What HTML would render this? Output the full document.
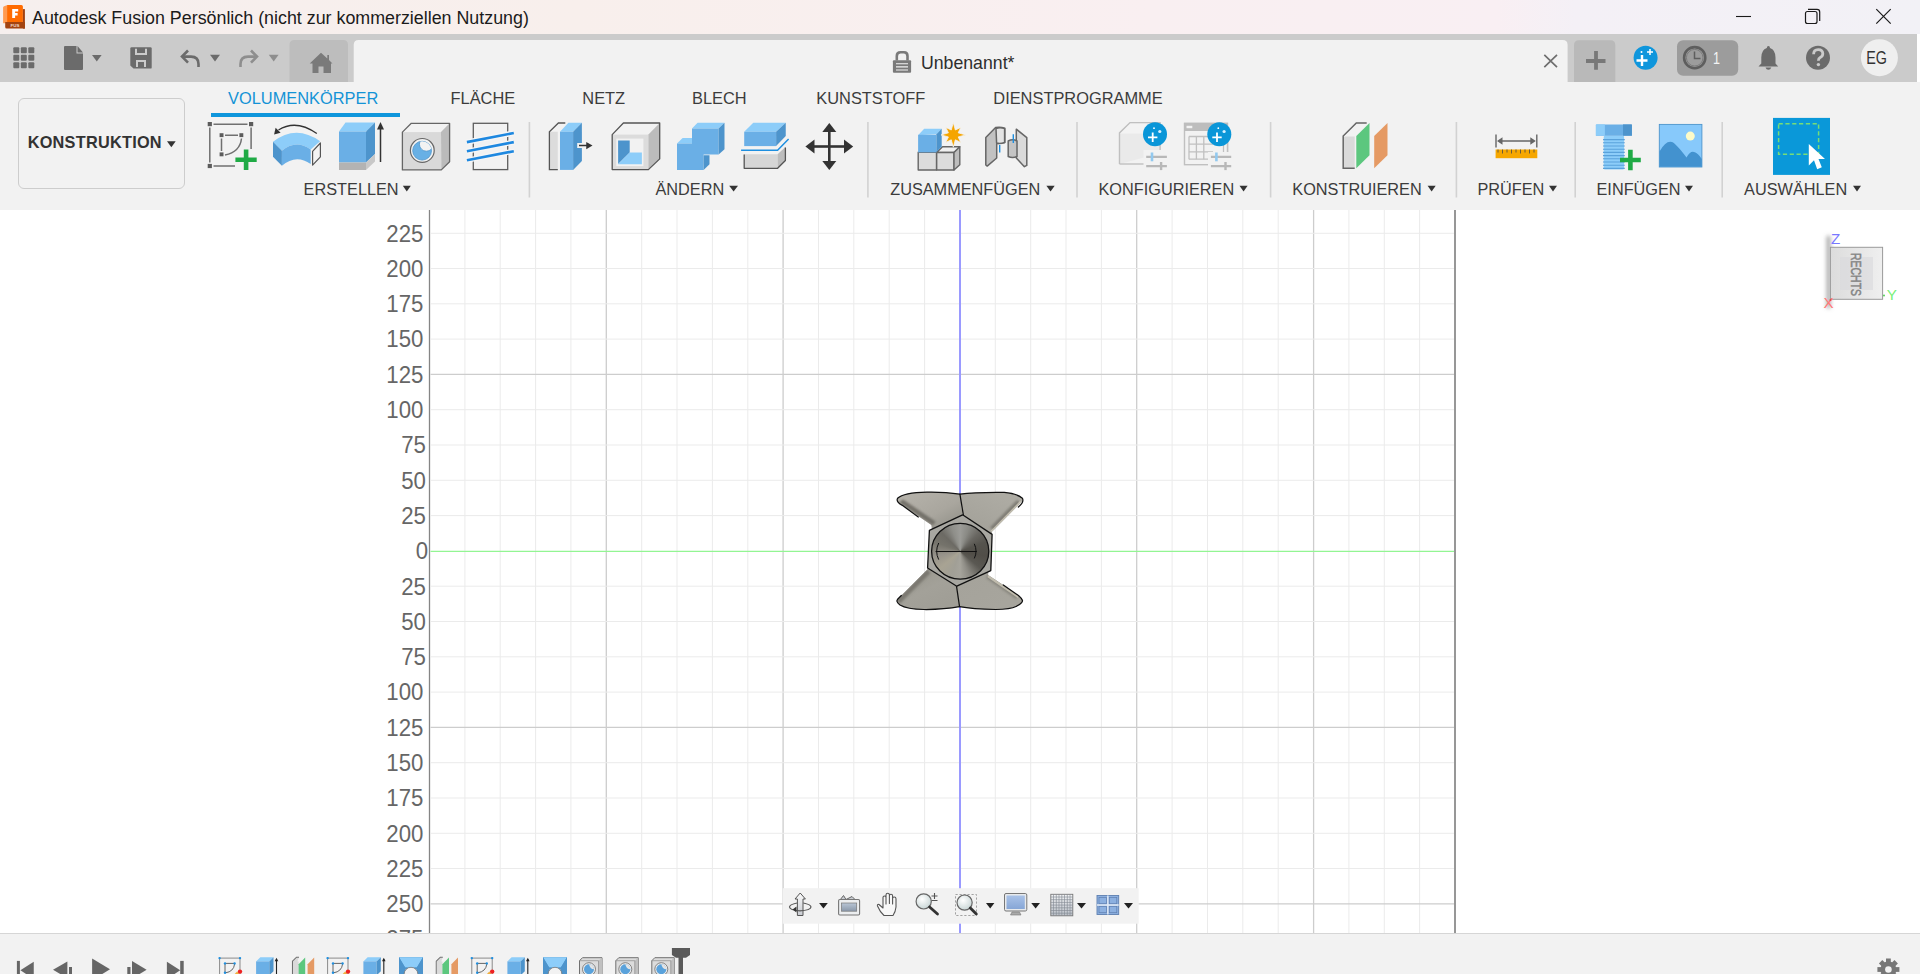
<!DOCTYPE html>
<html><head><meta charset="utf-8">
<style>
*{margin:0;padding:0;box-sizing:border-box}
html,body{width:1920px;height:974px;overflow:hidden;background:#fff;font-family:"Liberation Sans",sans-serif}
.abs{position:absolute}
#title{left:0;top:0;width:1920px;height:34px;background:linear-gradient(90deg,#f6efee 0%,#f8efec 30%,#f9eff1 60%,#f9eff3 78%,#f4f0f6 82%,#f2f1f6 100%)}
#title .t{left:32px;top:8px;font-size:17.85px;color:#1b1b1b;white-space:nowrap}
#strip{left:0;top:34px;width:1917px;height:48px;background:#cbcbcb}
#ribbon{left:0;top:82px;width:1920px;height:128px;background:#f2f2f2}
#view{left:0;top:210px;width:1920px;height:723px;background:#fff}
#tl{left:0;top:933px;width:1920px;height:41px;background:#f2f2f2;border-top:1px solid #d6d6d6}
.tab{top:89px;font-size:16.4px;color:#3c3c3c;white-space:nowrap}
.grp{top:180px;font-size:16.3px;color:#3c3c3c;white-space:nowrap}
.tri{display:inline-block;width:0;height:0;border-left:4.5px solid transparent;border-right:4.5px solid transparent;border-top:6px solid #333;vertical-align:middle;margin-left:4px;position:relative;top:-2px}
.sep{top:122px;width:2px;height:76px;background:#d4d4d4}
</style></head><body>
<div id="title" class="abs">
<svg class="abs" style="left:0;top:0" width="30" height="32" viewBox="0 0 30 32">
<path d="M3.1 7.6 Q3.1 6.6 4.1 6.3 L7.5 5 V23.2 H3.1 Z" fill="#ff9a50"/>
<path d="M7.1 4.9 H21.4 Q22.9 4.9 22.9 6.4 V22 H7.1 Z" fill="#ff6b00"/>
<path d="M22.9 9.1 H24.9 V28.6 H22.9 Z" fill="#a04010"/>
<path d="M5.2 22 H24.9 V28.6 H6.7 Q5.2 28.6 5.2 27.1 Z" fill="#a34310"/>
<path d="M12.2 8.9 H18.2 V11.4 H15.1 V13 H17.6 V15.4 H15.1 V17.9 H12.2 Z" fill="#fff"/>
<text x="15" y="26.6" font-family="Liberation Sans" font-weight="700" font-size="4.4" fill="#f2dccc" text-anchor="middle" textLength="8.9" lengthAdjust="spacingAndGlyphs">FUS</text>
</svg>
<div class="abs t">Autodesk Fusion Persönlich (nicht zur kommerziellen Nutzung)</div>
<svg class="abs" style="left:1730px;top:4px" width="170" height="26" viewBox="1730 4 170 26">
<line x1="1736" y1="16.5" x2="1751" y2="16.5" stroke="#1a1a1a" stroke-width="1.1"/>
<rect x="1805.5" y="11.5" width="11.5" height="12" rx="2" fill="none" stroke="#1a1a1a" stroke-width="1.2"/>
<path d="M1808 9.3 H1817 Q1819.7 9.3 1819.7 12 V21" fill="none" stroke="#1a1a1a" stroke-width="1.2"/>
<path d="M1876.3 9.2 L1890.7 23.6 M1890.7 9.2 L1876.3 23.6" stroke="#1a1a1a" stroke-width="1.2"/>
</svg>

</div>
<div id="strip" class="abs"></div>
<svg class="abs" style="left:0;top:34px" width="1920" height="48" viewBox="0 34 1920 48">
<!-- app grid -->
<g fill="#6b6b6b">
<rect x="13.3" y="47.3" width="6" height="6" rx="1"/><rect x="20.8" y="47.3" width="6" height="6" rx="1"/><rect x="28.3" y="47.3" width="6" height="6" rx="1"/>
<rect x="13.3" y="54.8" width="6" height="6" rx="1"/><rect x="20.8" y="54.8" width="6" height="6" rx="1"/><rect x="28.3" y="54.8" width="6" height="6" rx="1"/>
<rect x="13.3" y="62.3" width="6" height="6" rx="1"/><rect x="20.8" y="62.3" width="6" height="6" rx="1"/><rect x="28.3" y="62.3" width="6" height="6" rx="1"/>
</g>
<!-- file -->
<path d="M65 46 H76.5 V53.5 H83 V69 Q83 70 82 70 H65 Q64 70 64 69 V47 Q64 46 65 46 Z" fill="#6b6b6b"/>
<path d="M77.5 46 L83 52.5 H77.5 Z" fill="#6b6b6b"/>
<path d="M92 55 H101.6 L96.8 61.4 Z" fill="#6b6b6b"/>
<!-- save -->
<path d="M131.5 47.3 H150.5 Q151.7 47.3 151.7 48.5 V67.4 Q151.7 68.6 150.5 68.6 H133.5 L130.3 65.5 V48.5 Q130.3 47.3 131.5 47.3 Z" fill="#6b6b6b"/>
<path d="M135 48.8 V55 H147 V48.8 H145 V53 H137 V48.8 Z" fill="#cbcbcb"/>
<path d="M136 67 V60 H146 V67 H144 V62 H138 V67 Z" fill="#cbcbcb"/>
<!-- undo -->
<path d="M188 50.5 L182 56.6 L188 62.7" fill="none" stroke="#6b6b6b" stroke-width="2.6" stroke-linejoin="miter"/>
<path d="M182.5 56.6 H191 Q198.5 56.6 198.5 64 V67" fill="none" stroke="#6b6b6b" stroke-width="2.6"/>
<path d="M210 54.8 H220 L215 61.5 Z" fill="#6b6b6b"/>
<!-- redo -->
<path d="M251 50.5 L257 56.6 L251 62.7" fill="none" stroke="#8e8e8e" stroke-width="2.6"/>
<path d="M256.5 56.6 H248 Q240.5 56.6 240.5 64 V67" fill="none" stroke="#8e8e8e" stroke-width="2.6"/>
<path d="M268.8 54.8 H278.6 L273.7 61.5 Z" fill="#8e8e8e"/>
<!-- home tab -->
<path d="M289.5 82 V45 Q289.5 40 294.5 40 H343 Q348 40 348 45 V82 Z" fill="#bdbdbd"/>
<path d="M321 52.7 L309.7 63.5 L312.5 63.5 V73 H331 V63.5 H332.5 L329 60 V55 H327.3 V58.5 Z" fill="#7a7a7a"/>
<rect x="318.5" y="66.5" width="5" height="6.5" fill="#bdbdbd"/>
<!-- doc tab -->
<path d="M353.7 82 V45 Q353.7 40 358.7 40 H1562.6 Q1567.6 40 1567.6 45 V82 Z" fill="#f2f2f2"/>
<path d="M1544.3 54.9 L1557 67.2 M1557 54.9 L1544.3 67.2" stroke="#6e6e6e" stroke-width="1.7"/>
<!-- lock -->
<path d="M896.8 60.5 V56 Q896.8 52.2 900.5 52.2 H904 Q907.5 52.2 907.5 56 V60.5" fill="none" stroke="#7a7a7a" stroke-width="2.6"/>
<rect x="892.9" y="60.3" width="18.2" height="12.5" rx="1" fill="#7a7a7a"/>
<path d="M896 63.8 H908 M896 66.9 H908 M896 70 H908" stroke="#f2f2f2" stroke-width="1.1"/>
<!-- + tab -->
<path d="M1574 82 V45 Q1574 40.2 1579 40.2 H1610.3 Q1615.3 40.2 1615.3 45 V82 Z" fill="#b9b9b9"/>
<path d="M1596 51 V69.7 M1586 61 H1605.5" stroke="#787878" stroke-width="3.8"/>
<!-- sparkle blue -->
<circle cx="1645.6" cy="57.7" r="12" fill="#0f96dc"/>
<path d="M1642 55 V66 M1636.5 60.5 H1647.5" stroke="#fff" stroke-width="2.4"/>
<path d="M1650 49 V55 M1647 52 H1653" stroke="#fff" stroke-width="1.5"/>
<circle cx="1641.5" cy="52" r="1" fill="#fff"/>
<!-- clock pill -->
<rect x="1677" y="40.2" width="61.2" height="35.5" rx="6" fill="#9c9c9c"/>
<circle cx="1694.7" cy="57.7" r="10.6" fill="none" stroke="#5e5e5e" stroke-width="2.6"/>
<circle cx="1694.7" cy="57.7" r="8.3" fill="none" stroke="#777" stroke-width="0.9"/>
<path d="M1694.5 51.5 V58.6 H1700.5" fill="none" stroke="#5e5e5e" stroke-width="1.5"/>
<text x="1716.4" y="63.8" font-family="Liberation Sans" font-size="16.5" fill="#f4f4f4" text-anchor="middle" textLength="7" lengthAdjust="spacingAndGlyphs">1</text>
<!-- bell -->
<path d="M1768.4 46 Q1770 46 1770 48 Q1775.5 50 1775.5 57.5 V63.5 L1778.2 66.5 H1758.5 L1761.3 63.5 V57.5 Q1761.3 50 1766.8 48 Q1766.8 46 1768.4 46 Z" fill="#6b6b6b"/>
<path d="M1765.5 67.5 H1771.3 Q1770.5 69.8 1768.4 69.8 Q1766.3 69.8 1765.5 67.5 Z" fill="#6b6b6b"/>
<!-- help -->
<circle cx="1818" cy="57.7" r="12" fill="#6b6b6b"/>
<path d="M1813.6 54.2 Q1813.6 49.6 1818.2 49.6 Q1822.8 49.6 1822.8 53.8 Q1822.8 56.2 1820.2 57.6 Q1818.4 58.6 1818.4 60.8" fill="none" stroke="#cbcbcb" stroke-width="2.8"/>
<circle cx="1818.4" cy="64.6" r="1.7" fill="#cbcbcb"/>
<!-- avatar -->
<circle cx="1879.4" cy="57.7" r="18.5" fill="#efefef"/>
<text x="1866.2" y="63.6" font-family="Liberation Sans" font-size="17.6" fill="#333" textLength="20.7" lengthAdjust="spacingAndGlyphs">EG</text>
</svg>
<div class="abs" style="left:921px;top:53px;font-size:17.7px;color:#2e2e2e;white-space:nowrap">Unbenannt*</div>

<div id="ribbon" class="abs"></div>
<div class="abs" style="left:17.5px;top:98px;width:167.5px;height:91px;border:1.5px solid #cdcdcd;border-radius:6px"></div>
<div class="abs" style="left:27.7px;top:132.5px;font-size:16.3px;font-weight:700;color:#333;white-space:nowrap;letter-spacing:0.25px">KONSTRUKTION</div>
<div class="tab abs" style="left:228px;color:#1493d6">VOLUMENKÖRPER</div>
<div class="abs" style="left:210.5px;top:113px;width:189.5px;height:4px;background:#0f96dc"></div>
<div class="tab abs" style="left:450.5px">FLÄCHE</div>
<div class="tab abs" style="left:582.3px">NETZ</div>
<div class="tab abs" style="left:692px">BLECH</div>
<div class="tab abs" style="left:816.3px">KUNSTSTOFF</div>
<div class="tab abs" style="left:993.3px">DIENSTPROGRAMME</div>
<div class="grp abs" style="left:303.6px">ERSTELLEN</div>
<div class="grp abs" style="left:655.4px">ÄNDERN</div>
<div class="grp abs" style="left:890.2px">ZUSAMMENFÜGEN</div>
<div class="grp abs" style="left:1098.5px">KONFIGURIEREN</div>
<div class="grp abs" style="left:1292.3px">KONSTRUIEREN</div>
<div class="grp abs" style="left:1477.4px">PRÜFEN</div>
<div class="grp abs" style="left:1596.5px">EINFÜGEN</div>
<div class="grp abs" style="left:1744.1px">AUSWÄHLEN</div>
<svg class="abs" style="left:0;top:82px" width="1920" height="128" viewBox="0 82 1920 128">
<g fill="#333">
<path d="M167 141.2 H175.7 L171.35 147.2 Z"/>
<path d="M402.8 185.8 H410.8 L406.8 191.5 Z"/>
<path d="M729.2 185.8 H738 L733.6 191.5 Z"/>
<path d="M1046.4 185.8 H1054.7 L1050.55 191.5 Z"/>
<path d="M1239.5 185.8 H1247.6 L1243.55 191.5 Z"/>
<path d="M1427.6 185.8 H1435.7 L1431.65 191.5 Z"/>
<path d="M1549 185.8 H1557 L1553 191.5 Z"/>
<path d="M1685 185.8 H1693 L1689 191.5 Z"/>
<path d="M1853 185.8 H1861 L1857 191.5 Z"/>
</g>
<g fill="#d2d2d2">
<rect x="528.6" y="122" width="1.6" height="75.5"/>
<rect x="867.1" y="122" width="1.6" height="75.5"/>
<rect x="1076.2" y="122" width="1.6" height="75.5"/>
<rect x="1269.8" y="122" width="1.6" height="75.5"/>
<rect x="1455.6" y="122" width="1.6" height="75.5"/>
<rect x="1574.4" y="122" width="1.6" height="75.5"/>
<rect x="1721.4" y="122" width="1.6" height="75.5"/>
</g>
<!-- sketch -->
<g stroke="#707070" stroke-width="1.5" fill="none">
<path d="M209.8 127.5 V162.5 M213.5 124.2 H247.5 M251.1 127.5 V149 M213.5 166 H235"/>
<path d="M221.5 138.5 V151 M225 135.2 H238 M241.5 138.5 Q240 152 225 155"/>
</g>
<g fill="#5c5c5c">
<rect x="207.7" y="122" width="4.2" height="4.2"/><rect x="249" y="122" width="4.2" height="4.2"/><rect x="207.7" y="163.9" width="4.2" height="4.2"/>
<rect x="219.6" y="133.2" width="3.9" height="3.9"/><rect x="239.4" y="133.2" width="3.9" height="3.9"/><rect x="219.6" y="152.4" width="3.9" height="3.9"/>
</g>
<path d="M246.1 149.5 V170 M235.4 159.8 H256.7" stroke="#1faa45" stroke-width="4.6"/>
<!-- revolve -->
<path d="M316.8 133.5 Q296 119 278.5 130" fill="none" stroke="#333" stroke-width="1.3"/>
<path d="M274.1 134.4 L275.6 127.8 L280.6 132.8 Z" fill="#333"/>
<path d="M273 141.8 Q296 124 320.1 141.3 L310.7 149.6 Q296 139 281.9 150.7 Z" fill="#8dcdf9"/>
<path d="M281.9 150.7 Q296 139 310.7 149.6 V164 Q296 153.5 281.9 165.7 Z" fill="#6aafe6"/>
<path d="M273 141.8 L281.9 150.7 V165.7 L273 156.8 Z" fill="#4d94cc"/>
<path d="M312.6 151.3 L320.4 143 V156.8 L312.6 165.1 Z" fill="#f4f4f4" stroke="#555" stroke-width="1.2" stroke-linejoin="round"/>
<!-- extrude -->
<path d="M339 131.5 L345.5 122.5 H375 L366 131.5 Z" fill="#8dcdf9"/>
<rect x="339" y="131.5" width="27" height="31" fill="#6aafe6"/>
<path d="M366 131.5 L375 122.5 V154 L366 162.5 Z" fill="#4d94cc"/>
<path d="M339 162.5 H366 V170 H339 Z" fill="#b3b3b3"/>
<path d="M366 162.5 L375 154 V161.5 L366 170 Z" fill="#c8c8c8"/>
<path d="M380.5 162 V127" stroke="#333" stroke-width="1.5"/>
<path d="M377 129.5 L380.5 122 L384 129.5 Z" fill="#333"/>
<!-- hole -->
<path d="M402.4 132.1 L411.3 123.3 H449.6 L441 132.1 Z" fill="#f2f2f2"/>
<rect x="402.4" y="132.1" width="38.6" height="37.8" fill="#d9d9d9"/>
<path d="M441 132.1 L449.6 123.3 V161.8 L441.3 169.9 Z" fill="#bbbbbb"/>
<path d="M402.4 132.1 L411.3 123.3 H449.6 V161.8 L441.3 169.9 H402.4 Z" fill="none" stroke="#666" stroke-width="1.3" stroke-linejoin="round"/>
<circle cx="422.3" cy="150.4" r="11.9" fill="#f2f2f2" stroke="#666" stroke-width="1.2"/>
<clipPath id="hc"><circle cx="422.1" cy="150.7" r="9.4"/></clipPath>
<circle cx="422.1" cy="150.7" r="9.4" fill="#68b0e5" stroke="#4d94cc" stroke-width="0.8"/>
<circle cx="426.4" cy="144.2" r="7" fill="#f2f2f2" stroke="#4d94cc" stroke-width="0.8" clip-path="url(#hc)"/>
<!-- thread -->
<rect x="473.3" y="123.3" width="34.4" height="46.3" fill="#f2f2f2" stroke="#5e5e5e" stroke-width="1.3"/>
<path d="M466.9 142.1 L513.8 133 M466.9 151.2 L513.8 142.1 M466.9 160.3 L513.8 151.2" stroke="#f6f6f6" stroke-width="5.2"/>
<path d="M466.9 142.1 L513.8 133 M466.9 151.2 L513.8 142.1 M466.9 160.3 L513.8 151.2" stroke="#1e88e0" stroke-width="2.6"/>
<!-- press pull -->
<rect x="549.4" y="131.75" width="8.4" height="37.85" fill="#dcdcdc"/>
<path d="M557.8 169.6 H549.4 V131.75 L558.4 123 H565.3" fill="none" stroke="#555" stroke-width="1.3"/>
<path d="M560 131.75 L568.4 122.7 H581.9 L573.1 131.75 Z" fill="#8dcdf9"/>
<rect x="560" y="131.75" width="13.1" height="38.15" fill="#6aafe6"/>
<path d="M573.1 131.75 L581.9 122.7 V161.1 L573.1 169.9 Z" fill="#4d94cc"/>
<rect x="577.2" y="143" width="4.8" height="5" fill="#f2f2f2"/>
<path d="M579 145.5 H588" stroke="#333" stroke-width="1.5"/>
<path d="M586.25 142.1 L592.5 145.5 L586.25 149.25 Z" fill="#333"/>
<!-- shell -->
<path d="M612.2 134.6 L623.4 123 H659.7 L648.4 134.6 Z" fill="#f2f2f2"/>
<rect x="612.2" y="134.6" width="36.2" height="35" fill="#dcdcdc"/>
<path d="M648.4 134.6 L659.7 123 V158.9 L648.4 169.6 Z" fill="#bcbcbc"/>
<path d="M612.2 169.6 V134.6 L623.4 123 H659.7 V158.9 L648.4 169.6 Z" fill="none" stroke="#555" stroke-width="1.3" stroke-linejoin="round"/>
<rect x="616.3" y="138.6" width="27.1" height="27.5" fill="#f2f2f2"/>
<path d="M618.1 140.5 H629.7 V152.4 L618.1 164 Z" fill="#4d94cc"/>
<path d="M618.1 164.2 L629.7 152.4 H641.9 V164.2 Z" fill="#8dcdf9"/>
<!-- combine -->
<path d="M677 143.6 L682.6 138 H692 V143.6 Z" fill="#8dcdf9"/>
<path d="M692 128.6 L697.6 122.7 H724.5 L718.6 128.6 Z" fill="#8dcdf9"/>
<path d="M677 143.6 H692 V128.6 H718.6 V154.6 H703.6 V169.9 H677 Z" fill="#6aafe6"/>
<path d="M718.6 128.6 L724.5 122.7 V149.25 L718.6 154.6 Z" fill="#4d94cc"/>
<path d="M703.6 155.2 H709.5 V164.25 L703.6 169.9 Z" fill="#4d94cc"/>
<!-- split body -->
<path d="M744.2 131.75 L753.25 122.7 H785.75 L776.1 131.75 Z" fill="#8dcdf9"/>
<rect x="744.2" y="131.75" width="31.9" height="14.35" fill="#6aafe6"/>
<path d="M776.1 131.75 L785.75 122.7 V136.1 L776.1 146.1 Z" fill="#4d94cc"/>
<path d="M741.1 150.2 H777.6 L788.6 138.9" fill="none" stroke="#1e8fe0" stroke-width="1.5"/>
<path d="M744.2 154.25 H777.6 V168.3 H744.2 Z" fill="#d6d6d6"/>
<path d="M777.6 154.25 L785.4 147 V160.5 L777.6 168.3 Z" fill="#bdbdbd"/>
<path d="M744.2 154.5 V168.3 H777.6 L785.4 160.5 V147.5" fill="none" stroke="#555" stroke-width="1.3" stroke-linejoin="round"/>
<!-- move -->
<g fill="#333">
<rect x="828" y="129" width="2.6" height="35"/>
<rect x="812" y="145.2" width="35" height="2.6"/>
<path d="M829.3 123 L836.3 132 H822.3 Z"/>
<path d="M829.3 170 L836.3 161 H822.3 Z"/>
<path d="M805.4 146.5 L814.5 139.5 V153.5 Z"/>
<path d="M853.2 146.5 L844 139.5 V153.5 Z"/>
</g>

<!-- new component -->
<g stroke="#666" stroke-width="1.4" stroke-linejoin="round">
<path d="M918.2 152.3 H936.5 V170 H918.2 Z" fill="#dcdcdc"/>
<path d="M936.7 152.5 L942.5 146.8 H959.8 L954 152.5 Z" fill="#f0f0f0"/>
<path d="M936.7 152.5 H954 V170 H936.7 Z" fill="#dcdcdc"/>
<path d="M954 152.5 L959.8 146.8 V164.7 L954 170 Z" fill="#bdbdbd"/>
</g>
<path d="M918.1 135.3 L924.2 128.8 H941.7 L936.4 134.2 Z" fill="#8dcdf9"/>
<path d="M918.1 134.8 H936.4 V152.4 H918.1 Z" fill="#6aafe6"/>
<path d="M936.4 134.2 L941.7 128.8 V146.4 L936.4 152.2 Z" fill="#4d94cc"/>
<path d="M953.30 122.60 L955.33 130.00 L960.80 127.40 L958.20 132.87 L965.60 134.90 L958.20 136.93 L960.80 142.40 L955.33 139.80 L953.30 147.20 L951.27 139.80 L945.80 142.40 L948.40 136.93 L941.00 134.90 L948.40 132.87 L945.80 127.40 L951.27 130.00 Z" fill="#f5a500" stroke="#f2f2f2" stroke-width="0.8"/>
<!-- joint -->
<g stroke="#666" stroke-width="1.5" stroke-linejoin="round">
<path d="M985.8 137.6 L995.6 127.6 Q1000 126.5 1004.8 128.2 V142.4 L996.7 143.7 V158 L987.2 166.1 L985.8 165 Z" fill="#c2c2c2"/>
<path d="M996 128.5 Q1000 127 1004.6 128.6 V142.5 Q1000 144 996.6 143 Z" fill="#e4e4e4"/>
<path d="M1016.3 129.2 L1026.8 137.6 V165.4 L1024.4 166.7 L1016.3 158 Z" fill="#dadada"/>
<path d="M1008.2 141 Q1012.6 138.6 1017 141 V156.5 Q1012.6 158.5 1008.2 156.5 Z" fill="#c4c4c4"/>
</g>
<path d="M999.7 145 V152.5 M1013.3 134.2 V143" stroke="#1e8fe0" stroke-width="1.4"/>
<!-- config 1 -->
<path d="M1119.5 164 V132.9 L1130 122.7 H1160.1 V153.2" fill="#eaeaea" stroke="#c0c0c0" stroke-width="1.4"/>
<path d="M1119.5 164 H1144" stroke="#c0c0c0" stroke-width="1.4"/>
<path d="M1120.3 133.6 L1130.3 123.4 H1159.3 V133.6 Z" fill="#f3f3f3"/>
<circle cx="1155" cy="134.2" r="12" fill="#0a96d8"/>
<path d="M1152.7 132.6 V142 M1148 137.3 H1157.4" stroke="#fff" stroke-width="1.8"/>
<circle cx="1154" cy="128.2" r="0.9" fill="#fff"/>
<circle cx="1159.8" cy="131.5" r="1.6" fill="#d8f0ff"/>
<rect x="1143.5" y="150" width="24" height="21" fill="#f2f2f2"/>
<path d="M1146.2 156.9 H1166.9 M1146.2 166.1 H1166.9" stroke="#b8b8b8" stroke-width="2.2"/>
<path d="M1152 152.5 V161.3" stroke="#92c9ef" stroke-width="2.6"/>
<path d="M1161.1 162 V170.1" stroke="#b8b8b8" stroke-width="2.4"/>
<!-- config 2 -->
<rect x="1184.5" y="123.4" width="43" height="41.3" fill="#f2f2f2" stroke="#c0c0c0" stroke-width="1.4"/>
<rect x="1184" y="122.8" width="44" height="8.2" fill="#bdbdbd"/>
<rect x="1186.5" y="125.8" width="5.8" height="2.4" fill="#f2f2f2"/>
<g stroke="#c0c0c0" stroke-width="1.3" fill="none">
<path d="M1188.9 136.5 H1211 M1188.9 144.2 H1213 M1188.9 151.9 H1213 M1188.9 159.2 H1208.5"/>
<path d="M1189 136.5 V159.2 M1196.4 136.5 V159.2 M1203.8 136.5 V159.2"/>
<path d="M1223.5 144 V153 M1227.6 140 V154"/>
</g>
<circle cx="1219.3" cy="134.2" r="12" fill="#0a96d8"/>
<path d="M1217 132.6 V142 M1212.3 137.3 H1221.7" stroke="#fff" stroke-width="1.8"/>
<circle cx="1218.3" cy="128.2" r="0.9" fill="#fff"/>
<circle cx="1224.1" cy="131.5" r="1.6" fill="#d8f0ff"/>
<rect x="1208" y="152" width="25" height="19" fill="#f2f2f2"/>
<path d="M1210.9 156.9 H1231.2 M1210.9 166.1 H1231.2" stroke="#b8b8b8" stroke-width="2.2"/>
<path d="M1216.4 152.5 V161.3" stroke="#92c9ef" stroke-width="2.6"/>
<path d="M1225.5 162 V170.1" stroke="#b8b8b8" stroke-width="2.4"/>
<!-- construct -->
<path d="M1343.2 136.5 H1354.7 V168.3 H1343.2 Z" fill="#dadada"/>
<path d="M1366.7 122.9 H1356.3 L1343.2 136 V168.3 H1354.7" fill="none" stroke="#666" stroke-width="1.5"/>
<path d="M1356.3 136 L1369.5 122.9 V155.2 L1356.3 168.3 Z" fill="#5cc77e"/>
<path d="M1374.2 136 L1387.5 122.9 V155.2 L1374.2 168.3 Z" fill="#e59a64"/>
<!-- measure -->
<path d="M1496 134.4 V147.5 M1536.8 134.4 V147.5" stroke="#666" stroke-width="1.4"/>
<path d="M1500 141 H1533" stroke="#666" stroke-width="1.4"/>
<path d="M1497 141 L1502.5 137.3 V144.7 Z M1535.8 141 L1530.3 137.3 V144.7 Z" fill="#666"/>
<rect x="1495.6" y="149.5" width="41.7" height="8.7" fill="#f6a700"/>
<path d="M1498 149.5 V152.5 M1502.5 149.5 V153.5 M1507 149.5 V152.5 M1511.5 149.5 V153.5 M1516 149.5 V152.5 M1520.5 149.5 V153.5 M1525 149.5 V152.5 M1529.5 149.5 V153.5 M1534 149.5 V152.5" stroke="#6a5a3a" stroke-width="1"/>
<!-- bolt -->
<rect x="1603.7" y="135.5" width="20.4" height="34" rx="1.5" fill="#8dcdf9"/>
<g stroke="#5aa2db" stroke-width="1.1">
<path d="M1603 139.6 H1624.8 M1603 142.8 H1624.8 M1603 146 H1624.8 M1603 149.2 H1624.8 M1603 152.4 H1624.8 M1603 155.6 H1624.8 M1603 158.8 H1624.8 M1603 162 H1624.8 M1603 165.2 H1624.8 M1603 168.4 H1624.8"/>
</g>
<path d="M1597 124.4 H1630.8 Q1631.9 124.4 1631.9 125.5 V135.7 H1595.9 V125.5 Q1595.9 124.4 1597 124.4 Z" fill="#6aafe6"/>
<rect x="1595.9" y="124.4" width="9" height="11.3" fill="#8dcdf9"/>
<rect x="1623" y="124.4" width="8.9" height="11.3" fill="#4d94cc"/>
<path d="M1630.4 149.8 V170.3 M1620 160 H1640.8" stroke="#1faa45" stroke-width="4.6"/>
<!-- image -->
<rect x="1659.3" y="124.4" width="42.6" height="42.6" fill="#87c9fb" stroke="#4d94cc" stroke-width="0.9"/>
<path d="M1659.5 151.5 Q1666 140 1672 142 Q1676 143.5 1686.5 157.5 Q1690 151 1694 152 Q1698 153 1701.8 159 V166.8 H1659.5 Z" fill="#4392cf"/>
<circle cx="1690.3" cy="136.1" r="4.5" fill="#fdfbc8"/>
<!-- select -->
<rect x="1773" y="117.9" width="57" height="57" fill="#0a98d9"/>
<rect x="1778.6" y="123.7" width="40" height="30.5" fill="none" stroke="#77dd77" stroke-width="1.5" stroke-dasharray="4.2 2.6"/>
<path d="M1808.8 143.9 V165.4 L1814 160.2 L1817.2 169.3 L1821.8 167.3 L1818.5 158.9 H1825 Z" fill="#fff"/>


</svg>

<div id="view" class="abs"></div>
<svg class="abs" style="left:0;top:0" width="1920" height="974" viewBox="0 0 1920 974">
<g><line x1="429.5" y1="210" x2="429.5" y2="933" stroke="#858585" stroke-width="1.3"/>
<line x1="464.9" y1="210" x2="464.9" y2="933" stroke="#ebebeb" stroke-width="1"/>
<line x1="500.2" y1="210" x2="500.2" y2="933" stroke="#ebebeb" stroke-width="1"/>
<line x1="535.6" y1="210" x2="535.6" y2="933" stroke="#ebebeb" stroke-width="1"/>
<line x1="570.9" y1="210" x2="570.9" y2="933" stroke="#ebebeb" stroke-width="1"/>
<line x1="606.3" y1="210" x2="606.3" y2="933" stroke="#cdcdcd" stroke-width="1.3"/>
<line x1="641.7" y1="210" x2="641.7" y2="933" stroke="#ebebeb" stroke-width="1"/>
<line x1="677.0" y1="210" x2="677.0" y2="933" stroke="#ebebeb" stroke-width="1"/>
<line x1="712.4" y1="210" x2="712.4" y2="933" stroke="#ebebeb" stroke-width="1"/>
<line x1="747.8" y1="210" x2="747.8" y2="933" stroke="#ebebeb" stroke-width="1"/>
<line x1="783.1" y1="210" x2="783.1" y2="933" stroke="#cdcdcd" stroke-width="1.3"/>
<line x1="818.5" y1="210" x2="818.5" y2="933" stroke="#ebebeb" stroke-width="1"/>
<line x1="853.8" y1="210" x2="853.8" y2="933" stroke="#ebebeb" stroke-width="1"/>
<line x1="889.2" y1="210" x2="889.2" y2="933" stroke="#ebebeb" stroke-width="1"/>
<line x1="924.6" y1="210" x2="924.6" y2="933" stroke="#ebebeb" stroke-width="1"/>
<line x1="995.3" y1="210" x2="995.3" y2="933" stroke="#ebebeb" stroke-width="1"/>
<line x1="1030.7" y1="210" x2="1030.7" y2="933" stroke="#ebebeb" stroke-width="1"/>
<line x1="1066.0" y1="210" x2="1066.0" y2="933" stroke="#ebebeb" stroke-width="1"/>
<line x1="1101.4" y1="210" x2="1101.4" y2="933" stroke="#ebebeb" stroke-width="1"/>
<line x1="1136.7" y1="210" x2="1136.7" y2="933" stroke="#cdcdcd" stroke-width="1.3"/>
<line x1="1172.1" y1="210" x2="1172.1" y2="933" stroke="#ebebeb" stroke-width="1"/>
<line x1="1207.5" y1="210" x2="1207.5" y2="933" stroke="#ebebeb" stroke-width="1"/>
<line x1="1242.8" y1="210" x2="1242.8" y2="933" stroke="#ebebeb" stroke-width="1"/>
<line x1="1278.2" y1="210" x2="1278.2" y2="933" stroke="#ebebeb" stroke-width="1"/>
<line x1="1313.6" y1="210" x2="1313.6" y2="933" stroke="#cdcdcd" stroke-width="1.3"/>
<line x1="1348.9" y1="210" x2="1348.9" y2="933" stroke="#ebebeb" stroke-width="1"/>
<line x1="1384.3" y1="210" x2="1384.3" y2="933" stroke="#ebebeb" stroke-width="1"/>
<line x1="1419.6" y1="210" x2="1419.6" y2="933" stroke="#ebebeb" stroke-width="1"/>
<line x1="1455.0" y1="210" x2="1455.0" y2="933" stroke="#979797" stroke-width="2"/>
<line x1="430.5" y1="233.3" x2="1454" y2="233.3" stroke="#ebebeb" stroke-width="1"/>
<line x1="430.5" y1="268.5" x2="1454" y2="268.5" stroke="#ebebeb" stroke-width="1"/>
<line x1="430.5" y1="303.8" x2="1454" y2="303.8" stroke="#ebebeb" stroke-width="1"/>
<line x1="430.5" y1="339.1" x2="1454" y2="339.1" stroke="#ebebeb" stroke-width="1"/>
<line x1="430.5" y1="374.4" x2="1454" y2="374.4" stroke="#cdcdcd" stroke-width="1.3"/>
<line x1="430.5" y1="409.7" x2="1454" y2="409.7" stroke="#ebebeb" stroke-width="1"/>
<line x1="430.5" y1="445.0" x2="1454" y2="445.0" stroke="#ebebeb" stroke-width="1"/>
<line x1="430.5" y1="480.3" x2="1454" y2="480.3" stroke="#ebebeb" stroke-width="1"/>
<line x1="430.5" y1="515.6" x2="1454" y2="515.6" stroke="#ebebeb" stroke-width="1"/>
<line x1="430.5" y1="586.2" x2="1454" y2="586.2" stroke="#ebebeb" stroke-width="1"/>
<line x1="430.5" y1="621.5" x2="1454" y2="621.5" stroke="#ebebeb" stroke-width="1"/>
<line x1="430.5" y1="656.8" x2="1454" y2="656.8" stroke="#ebebeb" stroke-width="1"/>
<line x1="430.5" y1="692.1" x2="1454" y2="692.1" stroke="#ebebeb" stroke-width="1"/>
<line x1="430.5" y1="727.4" x2="1454" y2="727.4" stroke="#cdcdcd" stroke-width="1.3"/>
<line x1="430.5" y1="762.7" x2="1454" y2="762.7" stroke="#ebebeb" stroke-width="1"/>
<line x1="430.5" y1="798.0" x2="1454" y2="798.0" stroke="#ebebeb" stroke-width="1"/>
<line x1="430.5" y1="833.3" x2="1454" y2="833.3" stroke="#ebebeb" stroke-width="1"/>
<line x1="430.5" y1="868.5" x2="1454" y2="868.5" stroke="#ebebeb" stroke-width="1"/>
<line x1="430.5" y1="903.8" x2="1454" y2="903.8" stroke="#cdcdcd" stroke-width="1.3"/>
<line x1="430.5" y1="551.4" x2="1454" y2="551.4" stroke="#93f593" stroke-width="1.3"/>
<line x1="960" y1="210" x2="960" y2="933" stroke="#9a9aff" stroke-width="2"/></g>
<g font-family="Liberation Sans" font-size="23.5" fill="#666" transform="translate(423,0) scale(0.945,1) translate(-423,0)"><text x="423.4" y="241.7" text-anchor="end">225</text>
<text x="423.4" y="276.9" text-anchor="end">200</text>
<text x="423.4" y="312.2" text-anchor="end">175</text>
<text x="423.4" y="347.5" text-anchor="end">150</text>
<text x="423.4" y="382.8" text-anchor="end">125</text>
<text x="423.4" y="418.1" text-anchor="end">100</text>
<text x="426.1" y="453.4" text-anchor="end">75</text>
<text x="426.1" y="488.7" text-anchor="end">50</text>
<text x="426.1" y="524.0" text-anchor="end">25</text>
<text x="428.5" y="559.3" text-anchor="end">0</text>
<text x="426.1" y="594.6" text-anchor="end">25</text>
<text x="426.1" y="629.9" text-anchor="end">50</text>
<text x="426.1" y="665.2" text-anchor="end">75</text>
<text x="423.4" y="700.5" text-anchor="end">100</text>
<text x="423.4" y="735.8" text-anchor="end">125</text>
<text x="423.4" y="771.1" text-anchor="end">150</text>
<text x="423.4" y="806.4" text-anchor="end">175</text>
<text x="423.4" y="841.7" text-anchor="end">200</text>
<text x="423.4" y="876.9" text-anchor="end">225</text>
<text x="423.4" y="912.2" text-anchor="end">250</text>
<text x="423.4" y="947.5" text-anchor="end">275</text></g>
<defs>
<linearGradient id="wtl" gradientUnits="userSpaceOnUse" x1="915" y1="492" x2="935" y2="528">
<stop offset="0" stop-color="#b4b1a9"/><stop offset="0.7" stop-color="#a9a69e"/><stop offset="1" stop-color="#9c9a92"/>
</linearGradient>
<linearGradient id="wtr" gradientUnits="userSpaceOnUse" x1="990" y1="492" x2="975" y2="528">
<stop offset="0" stop-color="#adaba3"/><stop offset="1" stop-color="#a4a29a"/>
</linearGradient>
<linearGradient id="wbl" gradientUnits="userSpaceOnUse" x1="915" y1="572" x2="935" y2="609">
<stop offset="0" stop-color="#9a988f"/><stop offset="0.5" stop-color="#a3a199"/><stop offset="1" stop-color="#a09e96"/>
</linearGradient>
<linearGradient id="wbr" gradientUnits="userSpaceOnUse" x1="975" y1="575" x2="995" y2="609">
<stop offset="0" stop-color="#a5a39b"/><stop offset="1" stop-color="#a7a59d"/>
</linearGradient>
<filter id="mb" x="-0.5" y="-0.5" width="2" height="2"><feGaussianBlur stdDeviation="0.9"/></filter>
<clipPath id="ctl"><path d="M959.9 494.2 C948 492.3 937 491.9 927 492.1 C914 492.3 902 494 897.6 498.3 C896.3 500.5 898 503.5 902.3 505.3 L931.3 525 L931.9 529.6 L929.4 530.4 L962.6 514.8 Z"/></clipPath>
<clipPath id="ctr"><path d="M959.9 494.2 C972 492.5 988 492.2 1004.3 492.4 C1012 493 1019 495.5 1022.4 498.2 C1023.3 499.8 1022.7 501 1021 502.5 L992 531.8 L992.1 534.4 L962.6 514.8 Z"/></clipPath>
<clipPath id="cbl"><path d="M959.5 606.7 C950 608.5 936 609.6 924 609.5 C914 609.3 905 608 900 605 C896.5 602.5 896.5 600.5 897.6 599.3 L927 569.8 L927.8 568.3 L956.5 586.1 Z"/></clipPath>
<clipPath id="cbr"><path d="M959.5 606.7 C966 608 980 609.3 995.7 609.5 C1005 609.3 1012 608.5 1016 606.5 C1022 604 1023 601 1022.2 600 C1021 597.5 1019.5 596.5 1018.4 595.5 L1003.3 584.9 L988.2 575.1 L988.2 571.3 L990.8 570.6 L956.5 586.1 Z"/></clipPath>
<clipPath id="cc"><ellipse cx="960.2" cy="551.3" rx="28.6" ry="27.9"/></clipPath>
</defs>
<g clip-path="url(#ctl)">
<rect x="890" y="488" width="80" height="50" fill="url(#wtl)"/>
<path d="M899 502.5 L933 525.5 L935.5 521.5 L903 499.5 Z" fill="#6a6861" filter="url(#mb)" opacity="0.85"/>
</g>
<g clip-path="url(#ctr)">
<rect x="955" y="488" width="75" height="50" fill="url(#wtr)"/>
<path d="M1017 500 L990 527.5 L993.5 530 L1020.5 503 Z" fill="#74726a" filter="url(#mb)" opacity="0.8"/>
<path d="M1021.5 502 L992 531.8 L990.5 531 L1020 501 Z" fill="#d8d3c2" opacity="0.7"/>
</g>
<g clip-path="url(#cbl)">
<rect x="890" y="562" width="75" height="52" fill="url(#wbl)"/>
<path d="M896.5 600 L927 569.5 L930.5 573 L900 603.5 Z" fill="#6e6c65" filter="url(#mb)" opacity="0.75"/>
</g>
<g clip-path="url(#cbr)">
<rect x="952" y="562" width="78" height="52" fill="url(#wbr)"/>
<path d="M1019 595.5 L988 574.5 L986 578 L1016 599 Z" fill="#76746c" filter="url(#mb)" opacity="0.6"/>
<path d="M1019 596 L988.2 575.1 L987.5 577.3 L1017.8 598 Z" fill="#d5d0bf" opacity="0.7"/>
</g>
<g fill="none" stroke="#111" stroke-width="1.25" stroke-linejoin="round" stroke-linecap="round">
<path d="M918.3 517 L902.3 505.3 C898 503.5 896.3 500.5 897.6 498.3 C902 494 914 492.3 927 492.1 C937 491.9 948 492.3 959.9 494.2 C972 492.5 988 492.2 1004.3 492.4 C1012 493 1019 495.5 1022.4 498.2 C1023.6 500.5 1022 504 1018.4 507"/>
<path d="M959.9 494.2 L963.3 514.6"/>
<path d="M901.3 595.5 L897.6 599.3 C896.5 600.5 896.5 602.5 900 605 C905 608 914 609.3 924 609.5 C936 609.6 950 608.5 959.5 606.7 C966 608 980 609.3 995.7 609.5 C1005 609.3 1012 608.5 1016 606.5 C1022 604 1023 601 1022.2 600 C1021 597.5 1019.5 596.5 1018.4 595.5 L1003.3 584.9"/>
<path d="M956.5 586.1 L959.5 606.4"/>
</g>
<!-- hex -->
<path d="M962.6 514.8 L992.1 534.4 L990.8 570.6 L956.8 586.2 L927.6 568 L929.4 530.4 Z" fill="#a8a7a1" stroke="#111" stroke-width="1.3" stroke-linejoin="round"/>
<g clip-path="url(#cc)"><foreignObject x="930" y="522" width="61" height="59"><div style="width:61px;height:59px;background:conic-gradient(from 0deg at 30.2px 29.3px,#9c9c98 0deg,#8a8a85 20deg,#696762 45deg,#55534d 70deg,#514e48 100deg,#5a5852 130deg,#8e8c85 160deg,#a6a49c 180deg,#a19f96 200deg,#a8a393 230deg,#96928a 260deg,#75736b 290deg,#6c6a64 315deg,#8e8e89 340deg,#9c9c98 360deg)"></div></foreignObject></g>
<ellipse cx="960.2" cy="551.3" rx="28.6" ry="27.9" fill="none" stroke="#111" stroke-width="1.3"/>
<path d="M935.6 551.5 H976.8" stroke="#111" stroke-width="1"/>
<path d="M938.7 543 Q934.6 551.3 938.7 559.6 M974.3 543.8 Q977.8 551.3 974.3 558.4" fill="none" stroke="#111" stroke-width="1"/>

<defs>
<linearGradient id="vcsh" x1="0" x2="1"><stop offset="0" stop-color="#fff" stop-opacity="0"/><stop offset="0.6" stop-color="#888" stop-opacity="0.55"/><stop offset="1" stop-color="#777" stop-opacity="0.8"/></linearGradient>
<linearGradient id="vcf" x1="0" x2="1"><stop offset="0" stop-color="#dcdcdc"/><stop offset="1" stop-color="#efefef"/></linearGradient>
</defs>
<filter id="blr" x="-2" y="-0.5" width="5" height="2"><feGaussianBlur stdDeviation="2.2"/></filter><rect x="1826.8" y="236" width="3.5" height="72" fill="#9a9a9a" filter="url(#blr)"/>
<rect x="1830.4" y="247.3" width="52.2" height="52" fill="url(#vcf)" stroke="#9a9a9a" stroke-width="1"/>
<rect x="1840" y="257" width="33" height="33" fill="#d8d9dc" opacity="0.6"/>
<text x="0" y="0" transform="translate(1851,253) rotate(90)" font-family="Liberation Sans" font-size="15.5" font-weight="400" fill="#858585" stroke="#858585" stroke-width="0.5" textLength="43" lengthAdjust="spacingAndGlyphs">RECHTS</text>
<text x="1831" y="244.4" font-family="Liberation Sans" font-size="15.2" fill="#7878ff">Z</text>
<text x="1823.6" y="307.7" font-family="Liberation Sans" font-size="15.2" fill="#ff7878">X</text>
<text x="1886.8" y="300.3" font-family="Liberation Sans" font-size="15.2" fill="#78f078">Y</text>
<circle cx="1884" cy="295.5" r="0.9" fill="#4c4"/>
<circle cx="1830.5" cy="300" r="1" fill="#e44"/>

</svg>
<svg class="abs" style="left:782px;top:888px" width="358" height="36" viewBox="782 888 358 36">
<defs>
<linearGradient id="ng1" x1="0" y1="0" x2="0" y2="1"><stop offset="0" stop-color="#fafafa"/><stop offset="1" stop-color="#c9ccd2"/></linearGradient>
<linearGradient id="ng2" x1="0" y1="0" x2="0" y2="1"><stop offset="0" stop-color="#b9c6d6"/><stop offset="1" stop-color="#8a98aa"/></linearGradient>
<radialGradient id="ng3" cx="0.4" cy="0.35" r="0.7"><stop offset="0" stop-color="#ffffff"/><stop offset="1" stop-color="#c6d4d4"/></radialGradient>
</defs>
<rect x="782.7" y="888.2" width="356" height="35.5" fill="#f2f2f2"/>
<!-- orbit -->
<path d="M800.2 893 L795 899 H797.4 V915.5 H803 V899 H805.4 Z" fill="url(#ng1)" stroke="#555" stroke-width="1" stroke-linejoin="round"/>
<path d="M797 903 Q789.5 904.5 789.5 907 Q790 910.3 800 910.8 Q810.5 910.3 811 907 Q811 904.5 803.3 903" fill="none" stroke="#555" stroke-width="1.2"/>
<path d="M792.5 909.5 L796.5 906.5 V912.5 Z" fill="#333"/>
<path d="M819.1 903 H827.8 L823.45 908.4 Z" fill="#222"/>
<!-- look at -->
<path d="M840 900 L843.5 895.5 L846 899.5 L852 896.5 L855 899.5" fill="#c8ccd2" stroke="#666" stroke-width="1"/>
<rect x="838.6" y="899.5" width="21" height="15.5" rx="1.2" fill="#eceef0" stroke="#777" stroke-width="1.1"/>
<rect x="841.5" y="903" width="15.2" height="8.2" fill="url(#ng2)" stroke="#777" stroke-width="0.7"/>
<!-- hand -->
<path d="M884 915.5 Q880 912 877.5 906 Q877 904 879 904.5 L883 908 V897.5 Q883 896 884.5 896 Q886 896 886 897.5 V904 V895 Q886 893.3 887.7 893.3 Q889.4 893.3 889.4 895 V903.5 V896 Q889.4 894.3 891 894.3 Q892.6 894.3 892.6 896 V904 V898.5 Q892.6 897 894.2 897 Q896 897 896 898.8 V907 Q895.5 912 893 915.5 Z" fill="#f8f8f8" stroke="#555" stroke-width="1.1" stroke-linejoin="round"/>
<!-- zoom -->
<circle cx="923.7" cy="901.4" r="7.6" fill="url(#ng3)" stroke="#666" stroke-width="1.2"/>
<path d="M929.6 907 L937.5 914" stroke="#333" stroke-width="2.8" stroke-linecap="round"/>
<path d="M934.5 893 V899 M931.5 896 H937.5 M931.5 900.5 H937.5" stroke="#555" stroke-width="1.1"/>
<!-- zoom window -->
<rect x="955.5" y="894.5" width="21" height="21" fill="none" stroke="#999" stroke-width="0.9" stroke-dasharray="2.2 1.8"/>
<circle cx="964.6" cy="902.6" r="7.6" fill="url(#ng3)" stroke="#666" stroke-width="1.2"/>
<path d="M970.3 908 L976.3 914" stroke="#333" stroke-width="2.8" stroke-linecap="round"/>
<path d="M986 903 H994.4 L990.2 908.4 Z" fill="#222"/>
<!-- display -->
<rect x="1004.5" y="893.5" width="22.3" height="17.5" rx="1.5" fill="#e8eaec" stroke="#777" stroke-width="1"/>
<linearGradient id="ng4" x1="0" y1="0" x2="0" y2="1"><stop offset="0" stop-color="#a9c2e8"/><stop offset="1" stop-color="#86a6d6"/></linearGradient><rect x="1006.5" y="895.5" width="18.3" height="13.5" fill="url(#ng4)"/>
<path d="M1012 912 H1019.5 L1021 915 H1010.5 Z" fill="#aaa" stroke="#777" stroke-width="0.6"/>
<path d="M1031.25 903 H1040 L1035.6 908.4 Z" fill="#222"/>
<!-- grid -->
<linearGradient id="ng5" x1="0" y1="0" x2="0" y2="1"><stop offset="0" stop-color="#f4f5f7"/><stop offset="1" stop-color="#b9bec6"/></linearGradient><rect x="1050.8" y="894.3" width="22" height="21.5" fill="url(#ng5)" stroke="#777" stroke-width="0.9"/>
<g stroke="#858b94" stroke-width="0.65">
<path d="M1053.5 894.3 V915.8 M1056.3 894.3 V915.8 M1059 894.3 V915.8 M1061.8 894.3 V915.8 M1064.5 894.3 V915.8 M1067.3 894.3 V915.8 M1070 894.3 V915.8"/>
<path d="M1050.8 897 H1072.8 M1050.8 899.7 H1072.8 M1050.8 902.4 H1072.8 M1050.8 905.1 H1072.8 M1050.8 907.8 H1072.8 M1050.8 910.5 H1072.8 M1050.8 913.2 H1072.8"/>
</g>
<path d="M1077 903 H1086 L1081.5 908.4 Z" fill="#222"/>
<!-- viewports -->
<rect x="1097" y="895.5" width="21.7" height="19" fill="#8cb0e0" stroke="#5e7fb0" stroke-width="0.9"/>
<path d="M1107.85 895.5 V914.5 M1097 905 H1118.7" stroke="#e6edf6" stroke-width="1.4"/>
<rect x="1099" y="897.5" width="7.5" height="6.2" fill="none" stroke="#5e7fb0" stroke-width="0.7"/>
<rect x="1109.3" y="897.5" width="7.5" height="6.2" fill="none" stroke="#5e7fb0" stroke-width="0.7"/>
<rect x="1099" y="906.5" width="7.5" height="6.2" fill="none" stroke="#5e7fb0" stroke-width="0.7"/>
<rect x="1109.3" y="906.5" width="7.5" height="6.2" fill="none" stroke="#5e7fb0" stroke-width="0.7"/>
<path d="M1124 903 H1133 L1128.5 908.4 Z" fill="#222"/>
</svg>

<div id="tl" class="abs"></div>
<svg class="abs" style="left:0;top:934px" width="1920" height="40" viewBox="0 934 1920 40">
<defs>
<g id="tsk">
<rect x="0" y="0" width="20.4" height="20" fill="none" stroke="#8a8a8a" stroke-width="1"/>
<path d="M5.4 5.3 H15 M5.4 5.3 V14.7 M15 6 Q14 13.5 6 14.7" fill="none" stroke="#555" stroke-width="0.9"/>
<g fill="#1e8fe0"><circle cx="0" cy="0" r="1.2"/><circle cx="20.4" cy="0" r="1.2"/><circle cx="5.4" cy="5.3" r="1.2"/><circle cx="15" cy="5.3" r="1.2"/><circle cx="5.4" cy="14.7" r="1.2"/></g>
<path d="M13 18 L17.5 13.5 L19.5 15.5 L15 20 Z" fill="#f0b040"/>
<circle cx="20.4" cy="13.5" r="2.2" fill="#ee2222"/>
</g>
<g id="tex">
<path d="M0 4.2 L4.2 0 H17.4 L13.2 4.2 Z" fill="#8dcdf9"/>
<rect x="0" y="4.2" width="13.2" height="14" fill="#6aafe6"/>
<path d="M13.2 4.2 L17.4 0 V14 L13.2 18.2 Z" fill="#4d94cc"/>
<path d="M20.4 2 V18" stroke="#222" stroke-width="1.1"/>
<path d="M18.6 4 L20.4 0.5 L22.2 4 Z" fill="#222"/>
</g>
<g id="tco">
<path d="M0.5 17 V4 L4.5 0 H7" fill="#dadada" stroke="#707070" stroke-width="1.1"/>
<rect x="1" y="4.2" width="5.6" height="13" fill="#dadada"/>
<path d="M6.6 7 L13.2 0.2 V17 L6.6 17 Z" fill="#5cc77e"/>
<path d="M15.6 7 L22.2 0.2 V17 L15.6 17 Z" fill="#e59a64"/>
</g>
<g id="tlo">
<rect x="0" y="0" width="24" height="18" fill="#4d94cc"/>
<path d="M0 0 H24 L18 10 H6 Z" fill="#8dcdf9"/>
<path d="M6 10 L0 0 V18 H6 Z M18 10 L24 0 V18 H18 Z" fill="#4d94cc"/>
<path d="M7.5 10 H16.5 L12 16 Z" fill="#6aafe6"/>
<circle cx="12" cy="17" r="6.9" fill="#f2f2f2" stroke="#777" stroke-width="0.8"/>
</g>
<g id="tho">
<path d="M0.5 18 V3.5 L3.5 0.5 H23 V18" fill="#dcdcdc" stroke="#707070" stroke-width="1"/>
<path d="M19.5 3.5 L23 0.5 V18 H19.5 Z" fill="#c0c0c0"/>
<path d="M0.5 3.5 H19.5 V18" fill="none" stroke="#8a8a8a" stroke-width="0.7"/>
<circle cx="10" cy="12" r="6.5" fill="#eeeeee" stroke="#777" stroke-width="0.9"/>
<circle cx="10" cy="12" r="5" fill="#5aa2db"/>
<path d="M10 7 A5 5 0 0 1 15 12 Q11 12 10 7 Z" fill="#e4e4e4"/>
</g>
</defs>
<g fill="#666">
<rect x="16.9" y="960.9" width="3" height="14"/>
<path d="M33.75 961.7 V979 L20.4 970.3 Z"/>
<path d="M67.4 961.4 V978.2 L53 969.8 Z"/>
<rect x="69" y="967" width="3" height="8"/>
<path d="M92.1 958.4 L110 969.3 L92.1 980.2 Z"/>
<rect x="127.3" y="967" width="3.2" height="8"/>
<path d="M132 961 V978.6 L146.6 969.8 Z"/>
<path d="M166.9 961.7 V979 L180.2 970.3 Z"/>
<rect x="180.2" y="960.9" width="3.5" height="14"/>
</g>
<use href="#tsk" x="219.6" y="958.1"/>
<use href="#tex" x="256.1" y="957.2"/>
<use href="#tco" x="292" y="957.2"/>
<use href="#tsk" x="327.6" y="958.1"/>
<use href="#tex" x="363.4" y="957.2"/>
<use href="#tlo" x="399" y="957.2"/>
<use href="#tco" x="435.8" y="957.2"/>
<use href="#tsk" x="471.8" y="958.1"/>
<use href="#tex" x="507.4" y="957.2"/>
<use href="#tlo" x="543" y="957.2"/>
<use href="#tho" x="579" y="957.2"/>
<use href="#tho" x="615.3" y="957.2"/>
<use href="#tho" x="651.3" y="957.2"/>
<path d="M671.9 947.9 H690 V955 L686 957.8 H683 V974 H678.5 V957.8 H676 L671.9 955 Z" fill="#5a5a5a"/>
<!-- gear -->
<g transform="translate(1888.4,969.5)">
<circle r="8" fill="#777"/>
<g fill="#777"><rect x="-2.4" y="-11" width="4.8" height="22"/><rect x="-2.4" y="-11" width="4.8" height="22" transform="rotate(45)"/><rect x="-2.4" y="-11" width="4.8" height="22" transform="rotate(90)"/><rect x="-2.4" y="-11" width="4.8" height="22" transform="rotate(135)"/></g>
<circle r="3.3" fill="#f2f2f2"/>
</g>
</svg>

</body></html>
